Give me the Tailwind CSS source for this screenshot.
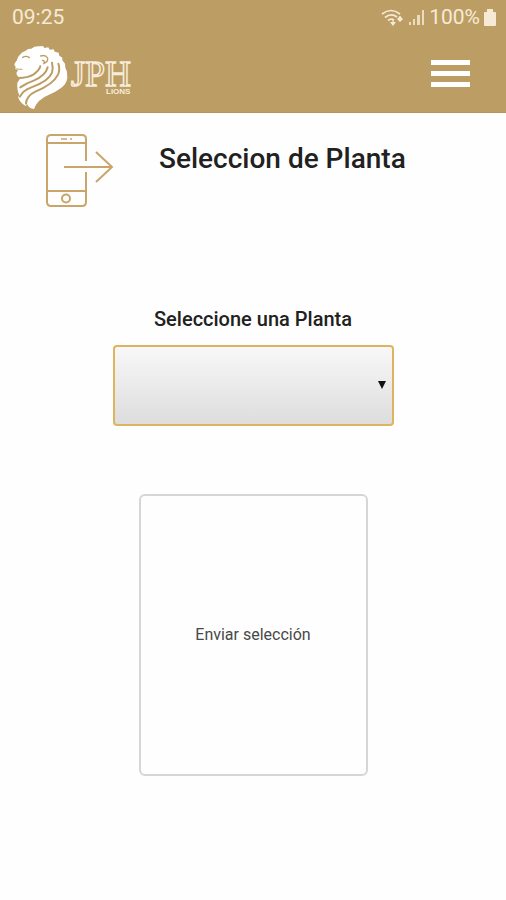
<!DOCTYPE html>
<html lang="es">
<head>
    <meta charset="UTF-8">
    <meta name="viewport" content="width=device-width, initial-scale=1.0">
    <script src="https://cdn.jsdelivr.net/npm/@tailwindcss/browser@4"></script>
    <title>Seleccion de Planta</title>
</head>
<body class="bg-[#fefefe] font-['Roboto',sans-serif] text-[#212121]">
    <header class="bg-[#bc9e64] border-b border-[#b3945a]">
        <!-- Barra de estado -->
        <div class="flex h-9 items-center justify-between pl-3 pr-[10px] text-[21px] text-[#f6ead6]">
            <span>09:25</span>
            <div class="flex items-center gap-1">
                <svg class="h-5 w-6" viewBox="0 0 24 20" fill="none" stroke="currentColor" stroke-width="1.7">
                    <path d="M1 6Q10 -1 19 6M4 9.500Q10 4.500 16 9M7 12.500Q10 10 13 12"/>
                    <path d="M12 12v5M19 8v5" stroke-width="1.200"/>
                    <path d="M9 14h6l-3 4zM16 11h6l-3-3zM16 11h6l-3 3z" fill="currentColor" stroke="none"/>
                </svg>
                <svg class="h-5 w-4" viewBox="0 0 16 20" fill="currentColor">
                    <path d="M0 14h2v3H0zM4 11h2v6H4zM8 7h3v10H8zM13 2h2v15h-2z" opacity=".8"/>
                </svg>
                <span>100%</span>
                <svg class="h-5 w-3" viewBox="0 0 12 20" fill="currentColor">
                    <path d="M3 1h6v3h2q1 0 1 1v12q0 1-1 1H1q-1 0-1-1V5q0-1 1-1h2z"/>
                </svg>
            </div>
        </div>
        <!-- Logo y menu -->
        <div class="flex h-19 items-center justify-between pl-3 pr-9">
            <a href="#" aria-label="JPH Lions">
                <svg class="h-18 w-[120px]" viewBox="12 38 120 72">
                    <g transform="scale(.33333)">
                        <path fill="#fff" d="M76 153Q83 145 94 146Q104 137 121 139L129 138L133 144L145 142L149 149L161 148L164 155L176 158L178 167L187 173L187 181L195 191L196 203L201 215L202 235Q199 253 183 264Q169 275 147 284Q112 298 102 327Q86 326 82 313L77 318Q60 309 54 290L59 288Q50 270 52 248L59 238L55 230Q48 226 50 217L54 211L46 207L47 200L43 195Q44 188 50 182Q52 171 59 165Q65 156 76 153Z"/>
                        <g fill="none" stroke="#bc9e64" stroke-linecap="round">
                            <path stroke-width="4" d="M68 172Q78 166 88 173"/>
                            <path stroke-width="3" d="M50 207Q58 208 66 208"/>
                            <path stroke-width="4" d="M122 168Q136 163 143 174Q145 185 132 190Q135 181 127 181"/>
                            <path stroke-width="6" d="M55 234Q83 234 101 223Q118 211 121 199"/>
                            <path stroke-width="6" d="M61 262Q78 250 101 242Q137 227 143 202"/>
                            <path stroke-width="6" d="M60 290Q69 271 94 262Q146 244 156 218Q160 203 156 188"/>
                            <path stroke-width="6" d="M78 311Q79 288 106 275Q160 253 174 224Q181 208 175 191"/>
                        </g>
                    </g>
                    <text x="71" y="86" fill="#bc9e64" stroke="#f7ecd9" stroke-width="1.500" class="font-['Liberation_Serif',serif] text-[36px]">JPH</text>
                    <text x="106" y="94" fill="#f7ecd9" class="font-['Liberation_Sans',sans-serif] text-[8px] font-bold">LIONS</text>
                </svg>
            </a>
            <button type="button" aria-label="Menu" class="flex w-[39px] flex-col gap-1.5 pt-1.5 pb-2">
                <span class="h-[5px] w-full bg-white"></span>
                <span class="h-[5px] w-full bg-white"></span>
                <span class="h-[5px] w-full bg-white"></span>
            </button>
        </div>
    </header>

    <main class="pb-8">
        <div class="flex gap-11 pl-11 pt-5">
            <svg class="h-[76px] w-[71px] shrink-0" viewBox="44 133 71 76" fill="none" stroke="#c9a56a" stroke-width="2">
                <path d="M86 161V139Q86 135 82 135H51Q47 135 47 139V202Q47 206 51 206H82Q86 206 86 202V172M47 143H86M47 191H86"/>
                <path d="M61 139H67M70 139H72" stroke-width="1.500"/>
                <circle cx="66" cy="198.500" r="4"/>
                <path d="M64 167H111M96 152L112 167L96 182"/>
            </svg>
            <h1 class="pt-2 text-[28px] leading-9 font-medium">Seleccion de Planta</h1>
        </div>

        <form class="flex flex-col items-center pt-24">
            <label for="planta" class="text-xl leading-7 font-medium">Seleccione una Planta</label>
            <div class="relative mt-3 w-[281px]">
                <select id="planta" class="block h-[81px] w-full appearance-none rounded-sm border-2 border-[#dfb45e] bg-linear-to-b from-[#f8f8f8] to-[#dddddd] px-3">
                    <option></option>
                </select>
                <svg class="pointer-events-none absolute top-9 right-2 h-2 w-2" viewBox="0 0 8 8" fill="#111">
                    <path d="M0 0h8L4 8z"/>
                </svg>
            </div>
            <button type="submit" class="mt-[68px] h-[282px] w-[229px] rounded-md border-2 border-[#d6d6d6] text-base text-[#484848]">Enviar selección</button>
        </form>
    </main>
</body>
</html>
